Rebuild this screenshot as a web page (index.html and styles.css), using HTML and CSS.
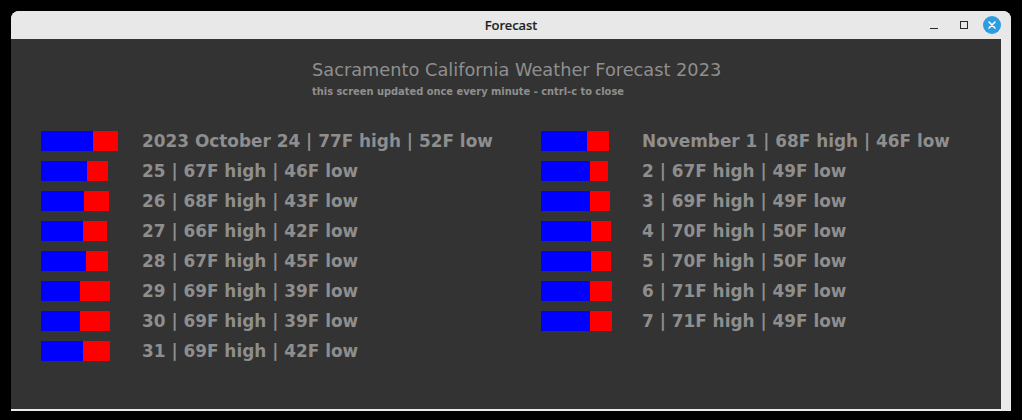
FILE: index.html
```html
<!DOCTYPE html>
<html>
<head>
<meta charset="utf-8">
<title>Forecast</title>
<link rel="stylesheet" href="styles.css">
</head>
<body>
<div class="window">
  <div class="titlebar">
    <span class="wtitle">Forecast</span>
    <div class="controls">
      <span class="ctl min"></span>
      <span class="ctl max"></span>
      <span class="ctl close"><svg width="18" height="18" viewBox="0 0 18 18"><path d="M6 6 L12 12 M12 6 L6 12" stroke="#fff" stroke-width="1.6" stroke-linecap="round"/></svg></span>
    </div>
  </div>
  <div class="content">
    <div class="heading">
      <div class="title">Sacramento California Weather Forecast 2023</div>
      <div class="subtitle">this screen updated once every minute - cntrl-c to close</div>
    </div>
    <div class="columns">
      <div class="col">
        <div class="row"><div class="barcell"><div class="bar" style="width:77px"><span class="low" style="width:52px"></span></div></div><span class="txt">2023 October 24 | 77F high | 52F low</span></div>
        <div class="row"><div class="barcell"><div class="bar" style="width:67px"><span class="low" style="width:46px"></span></div></div><span class="txt">25 | 67F high | 46F low</span></div>
        <div class="row"><div class="barcell"><div class="bar" style="width:68px"><span class="low" style="width:43px"></span></div></div><span class="txt">26 | 68F high | 43F low</span></div>
        <div class="row"><div class="barcell"><div class="bar" style="width:66px"><span class="low" style="width:42px"></span></div></div><span class="txt">27 | 66F high | 42F low</span></div>
        <div class="row"><div class="barcell"><div class="bar" style="width:67px"><span class="low" style="width:45px"></span></div></div><span class="txt">28 | 67F high | 45F low</span></div>
        <div class="row"><div class="barcell"><div class="bar" style="width:69px"><span class="low" style="width:39px"></span></div></div><span class="txt">29 | 69F high | 39F low</span></div>
        <div class="row"><div class="barcell"><div class="bar" style="width:69px"><span class="low" style="width:39px"></span></div></div><span class="txt">30 | 69F high | 39F low</span></div>
        <div class="row"><div class="barcell"><div class="bar" style="width:69px"><span class="low" style="width:42px"></span></div></div><span class="txt">31 | 69F high | 42F low</span></div>
      </div>
      <div class="col">
        <div class="row"><div class="barcell"><div class="bar" style="width:68px"><span class="low" style="width:46px"></span></div></div><span class="txt">November 1 | 68F high | 46F low</span></div>
        <div class="row"><div class="barcell"><div class="bar" style="width:67px"><span class="low" style="width:49px"></span></div></div><span class="txt">2 | 67F high | 49F low</span></div>
        <div class="row"><div class="barcell"><div class="bar" style="width:69px"><span class="low" style="width:49px"></span></div></div><span class="txt">3 | 69F high | 49F low</span></div>
        <div class="row"><div class="barcell"><div class="bar" style="width:70px"><span class="low" style="width:50px"></span></div></div><span class="txt">4 | 70F high | 50F low</span></div>
        <div class="row"><div class="barcell"><div class="bar" style="width:70px"><span class="low" style="width:50px"></span></div></div><span class="txt">5 | 70F high | 50F low</span></div>
        <div class="row"><div class="barcell"><div class="bar" style="width:71px"><span class="low" style="width:49px"></span></div></div><span class="txt">6 | 71F high | 49F low</span></div>
        <div class="row"><div class="barcell"><div class="bar" style="width:71px"><span class="low" style="width:49px"></span></div></div><span class="txt">7 | 71F high | 49F low</span></div>
      </div>
    </div>
  </div>
</div>
</body>
</html>
```
FILE: styles.css
```css
html, body {
  margin: 0;
  padding: 0;
  background: #000;
}
body {
  width: 1022px;
  height: 420px;
  overflow: hidden;
}
.window {
  margin: 11px 0 0 11px;
  width: 1000px;
  height: 400px;
  background: #ebebeb;
  border-radius: 8px 8px 0 0;
  display: flex;
  flex-direction: column;
}
.titlebar {
  position: relative;
  height: 28px;
  display: flex;
  align-items: center;
  justify-content: center;
  background: #e8e8e8;
  border-radius: 8px 8px 0 0;
}
.wtitle {
  font-family: "Noto Sans", "DejaVu Sans", sans-serif;
  font-size: 13px;
  font-weight: 500;
  color: #1e1e1e;
  line-height: 16px;
  -webkit-text-stroke: 0.2px #1e1e1e;
}
.controls {
  position: absolute;
  right: 10px;
  top: 5px;
  display: flex;
  align-items: center;
  height: 18px;
}
.ctl {
  display: block;
}
.min {
  width: 8px;
  height: 0;
  border-top: 1.5px solid #2a2a2a;
  margin-top: 6px;
  margin-right: 22px;
}
.max {
  width: 6px;
  height: 6px;
  border: 1.5px solid #2a2a2a;
  margin-right: 15px;
}
.close {
  width: 18px;
  height: 18px;
  border-radius: 50%;
  background: #2b9de0;
}
.close svg {
  display: block;
}
.content {
  width: 990px;
  height: 370px;
  background: #333333;
  color: #8e8e8e;
  font-family: "DejaVu Sans", sans-serif;
}
.heading {
  padding: 21px 0 0 301px;
}
.title {
  font-size: 17.75px;
  line-height: 21px;
  color: #8f8f8f;
}
.subtitle {
  margin-top: 5px;
  font-size: 9.9px;
  font-weight: bold;
  line-height: 12px;
  color: #8f8f8f;
}
.columns {
  display: grid;
  grid-template-columns: 500px 460px;
  padding: 33px 0 0 30px;
}
.col {
  display: flex;
  flex-direction: column;
  gap: 10px;
}
.row {
  display: flex;
  align-items: center;
  height: 20px;
}
.barcell {
  width: 101px;
  flex: none;
}
.bar {
  height: 20px;
  background: #ff0000;
}
.low {
  display: block;
  height: 20px;
  background: #0000ff;
}
.txt {
  font-size: 16.9px;
  font-weight: bold;
  line-height: 20px;
  white-space: nowrap;
  color: #8e8e8e;
}
```
